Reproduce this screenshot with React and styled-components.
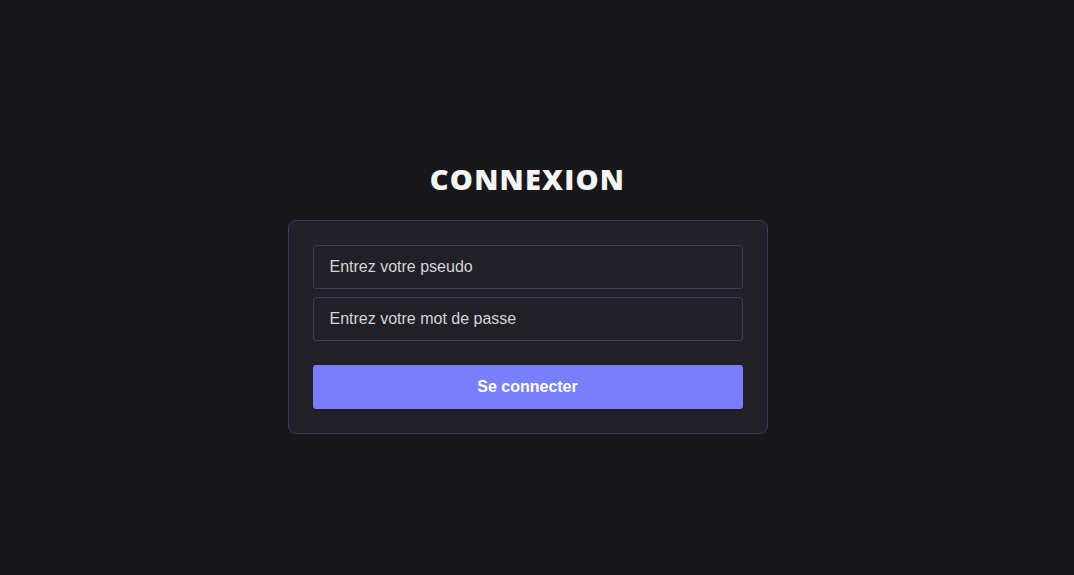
import React from "react";
import styled, { createGlobalStyle } from "styled-components";

const Global = createGlobalStyle`
  html, body { margin: 0; padding: 0; background: #18181b; }
  * { box-sizing: border-box; }
  body { font-family: "Liberation Sans", Arial, sans-serif; }
`;

const Page = styled.main`
  min-height: 100vh;
  padding: 18px 19px 0 0;
  display: flex;
  flex-direction: column;
  align-items: center;
  justify-content: center;
`;

const Title = styled.h1`
  margin: 0 0 22px;
  font-family: "Open Sans", "Noto Sans", sans-serif;
  font-weight: 800;
  font-size: 29px;
  line-height: 38px;
  letter-spacing: 1.2px;
  color: #f4f4f5;
`;

const Card = styled.form`
  width: 480px;
  padding: 24px;
  background: #212026;
  border: 1px solid #3a3b5e;
  border-radius: 8px;
  display: flex;
  flex-direction: column;
`;

const Field = styled.input`
  height: 44px;
  width: 100%;
  padding: 0 16px;
  margin-bottom: ${(p) => p.$gap || 0}px;
  background: #212026;
  border: 1px solid #3a3b5e;
  border-radius: 3px;
  font-family: "Liberation Sans", Arial, sans-serif;
  font-size: 16px;
  color: #e4e4e7;
  outline: none;
  &::placeholder { color: #d4d4d8; }
`;

const Button = styled.button`
  margin-top: 24px;
  height: 44px;
  width: 100%;
  border: none;
  border-radius: 3px;
  background: #787ffa;
  color: #ffffff;
  font-family: "Liberation Sans", Arial, sans-serif;
  font-weight: 700;
  font-size: 16px;
  cursor: pointer;
`;

export default function App() {
  return (
    <>
      <Global />
      <Page>
        <Title>CONNEXION</Title>
        <Card onSubmit={(e) => e.preventDefault()}>
          <Field $gap={8} type="text" placeholder="Entrez votre pseudo" />
          <Field type="password" placeholder="Entrez votre mot de passe" />
          <Button type="submit">Se connecter</Button>
        </Card>
      </Page>
    </>
  );
}
